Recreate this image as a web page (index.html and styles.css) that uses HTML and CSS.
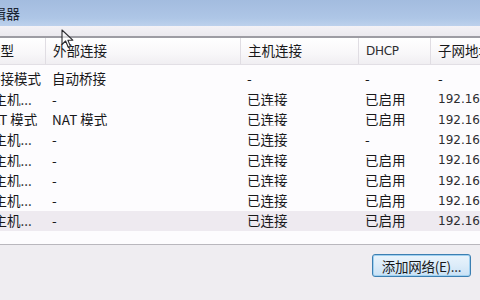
FILE: index.html
```html
<!DOCTYPE html>
<html lang="zh-CN">
<head>
  <meta charset="UTF-8" />
  <title>虚拟网络编辑器</title>
  <link rel="stylesheet" href="styles.css">
</head>
<body>
<div class="window">
  <div class="titlebar"><span class="title">编辑器</span></div>
  <div class="band"></div>
  <div class="table">
    <div class="row head">
      <div class="cell">类型</div>
      <div class="cell">外部连接</div>
      <div class="cell">主机连接</div>
      <div class="cell latin dhcp">DHCP</div>
      <div class="cell">子网地址</div>
    </div>
    <div class="body">
      <div class="row">
        <div class="cell">桥接模式</div>
        <div class="cell">自动桥接</div>
        <div class="cell">-</div>
        <div class="cell">-</div>
        <div class="cell">-</div>
      </div>
      <div class="row">
        <div class="cell trunc">仅主机...</div>
        <div class="cell">-</div>
        <div class="cell">已连接</div>
        <div class="cell">已启用</div>
        <div class="cell latin">192.168.17.0</div>
      </div>
      <div class="row">
        <div class="cell nat-first">NAT 模式</div>
        <div class="cell">NAT 模式</div>
        <div class="cell">已连接</div>
        <div class="cell">已启用</div>
        <div class="cell latin">192.168.80.0</div>
      </div>
      <div class="row">
        <div class="cell trunc">仅主机...</div>
        <div class="cell">-</div>
        <div class="cell">已连接</div>
        <div class="cell">-</div>
        <div class="cell latin">192.168.10.0</div>
      </div>
      <div class="row">
        <div class="cell trunc">仅主机...</div>
        <div class="cell">-</div>
        <div class="cell">已连接</div>
        <div class="cell">已启用</div>
        <div class="cell latin">192.168.20.0</div>
      </div>
      <div class="row">
        <div class="cell trunc">仅主机...</div>
        <div class="cell">-</div>
        <div class="cell">已连接</div>
        <div class="cell">已启用</div>
        <div class="cell latin">192.168.30.0</div>
      </div>
      <div class="row">
        <div class="cell trunc">仅主机...</div>
        <div class="cell">-</div>
        <div class="cell">已连接</div>
        <div class="cell">已启用</div>
        <div class="cell latin">192.168.40.0</div>
      </div>
      <div class="row selected">
        <div class="cell trunc">仅主机...</div>
        <div class="cell">-</div>
        <div class="cell">已连接</div>
        <div class="cell">已启用</div>
        <div class="cell latin">192.168.50.0</div>
      </div>
    </div>
  </div>
  <div class="actions">
    <button class="btn">添加网络(E)...</button>
  </div>
  <!-- mouse pointer caught in the shot -->
  <svg class="cursor" width="14" height="20" viewBox="0 0 14 20">
    <path d="M1 1 L1 15.5 L4.6 12 L7.4 18.5 L9.6 17.6 L6.9 11.2 L11.8 11.2 Z" fill="rgba(255,255,255,0.55)" stroke="#2a2a2e" stroke-width="1.1" stroke-linejoin="round"/>
  </svg>
</div>
</body>
</html>
```

FILE: styles.css
```css
body {
  margin: 0;
  width: 480px;
  height: 300px;
  overflow: hidden;
  background: #efedf1;
  font-family: "Noto Sans CJK SC", "Liberation Sans", sans-serif;
  font-size: 13.5px;
  color: #18181a;
}
.window {
  position: relative;
  width: 480px;
  height: 300px;
  overflow: hidden;
}
.titlebar {
  height: 26px;
  background: linear-gradient(180deg, #a3bcdf, #aec6e6 70%, #bdd1ec);
  display: flex;
  align-items: center;
  overflow: hidden;
}
.title {
  margin-left: -22px;
  font-size: 14px;
  color: #1b2433;
  white-space: nowrap;
}
.band {
  height: 10px;
  background: linear-gradient(180deg, #f4f2f6, #ebe9ee);
}
.table {
  margin-left: -20px;
  width: 560px;
  background: #fdfcfe;
  border-top: 2px solid #9d9ca3;
  border-bottom: 1px solid #b9b7bd;
}
.row {
  display: grid;
  grid-template-columns: 65px 195px 118px 72px 110px;
  height: 20.3px;
  align-items: center;
}
.cell {
  padding-left: 7px;
  white-space: nowrap;
  overflow: hidden;
  line-height: 1;
}
.trunc {
  margin-left: -7px;
}
.nat-first {
  margin-left: -5px;
}
.head {
  height: 26px;
  background: linear-gradient(180deg, #ffffff, #f8f7f9 60%, #f0eef2);
  border-bottom: 1px solid #e2dfe5;
}
.head .cell {
  height: 26px;
  display: flex;
  align-items: center;
  border-left: 1px solid #e0dde3;
  padding-left: 7px;
}
.head .cell:first-child {
  border-left: none;
}
.dhcp {
  font-size: 10.5px;
  color: #2b3a6e;
  letter-spacing: -0.3px;
}
.latin {
  font-family: "DejaVu Sans", "Liberation Sans", sans-serif;
  font-size: 12px;
  color: #2d2d30;
}
.body {
  height: 179px;
  padding-top: 4px;
  box-sizing: border-box;
}
.body .cell:nth-child(5) {
  padding-left: 8px;
}
.selected {
  background: #eeeaf0;
}
.actions {
  display: flex;
  justify-content: flex-end;
  padding: 9px 9px 0 0;
}
.btn {
  width: 99px;
  height: 23px;
  padding: 0;
  border: 1px solid #3c7fb2;
  border-radius: 3px;
  background: linear-gradient(180deg, #eaf4fc, #dcecf9 50%, #c9e1f5);
  box-shadow: inset 0 0 0 1px #9fd0f0;
  font-family: "Noto Sans CJK SC", "Liberation Sans", sans-serif;
  font-size: 13.5px;
  color: #18181a;
  letter-spacing: -0.3px;
}
.cursor {
  position: absolute;
  left: 61px;
  top: 29px;
}
```
